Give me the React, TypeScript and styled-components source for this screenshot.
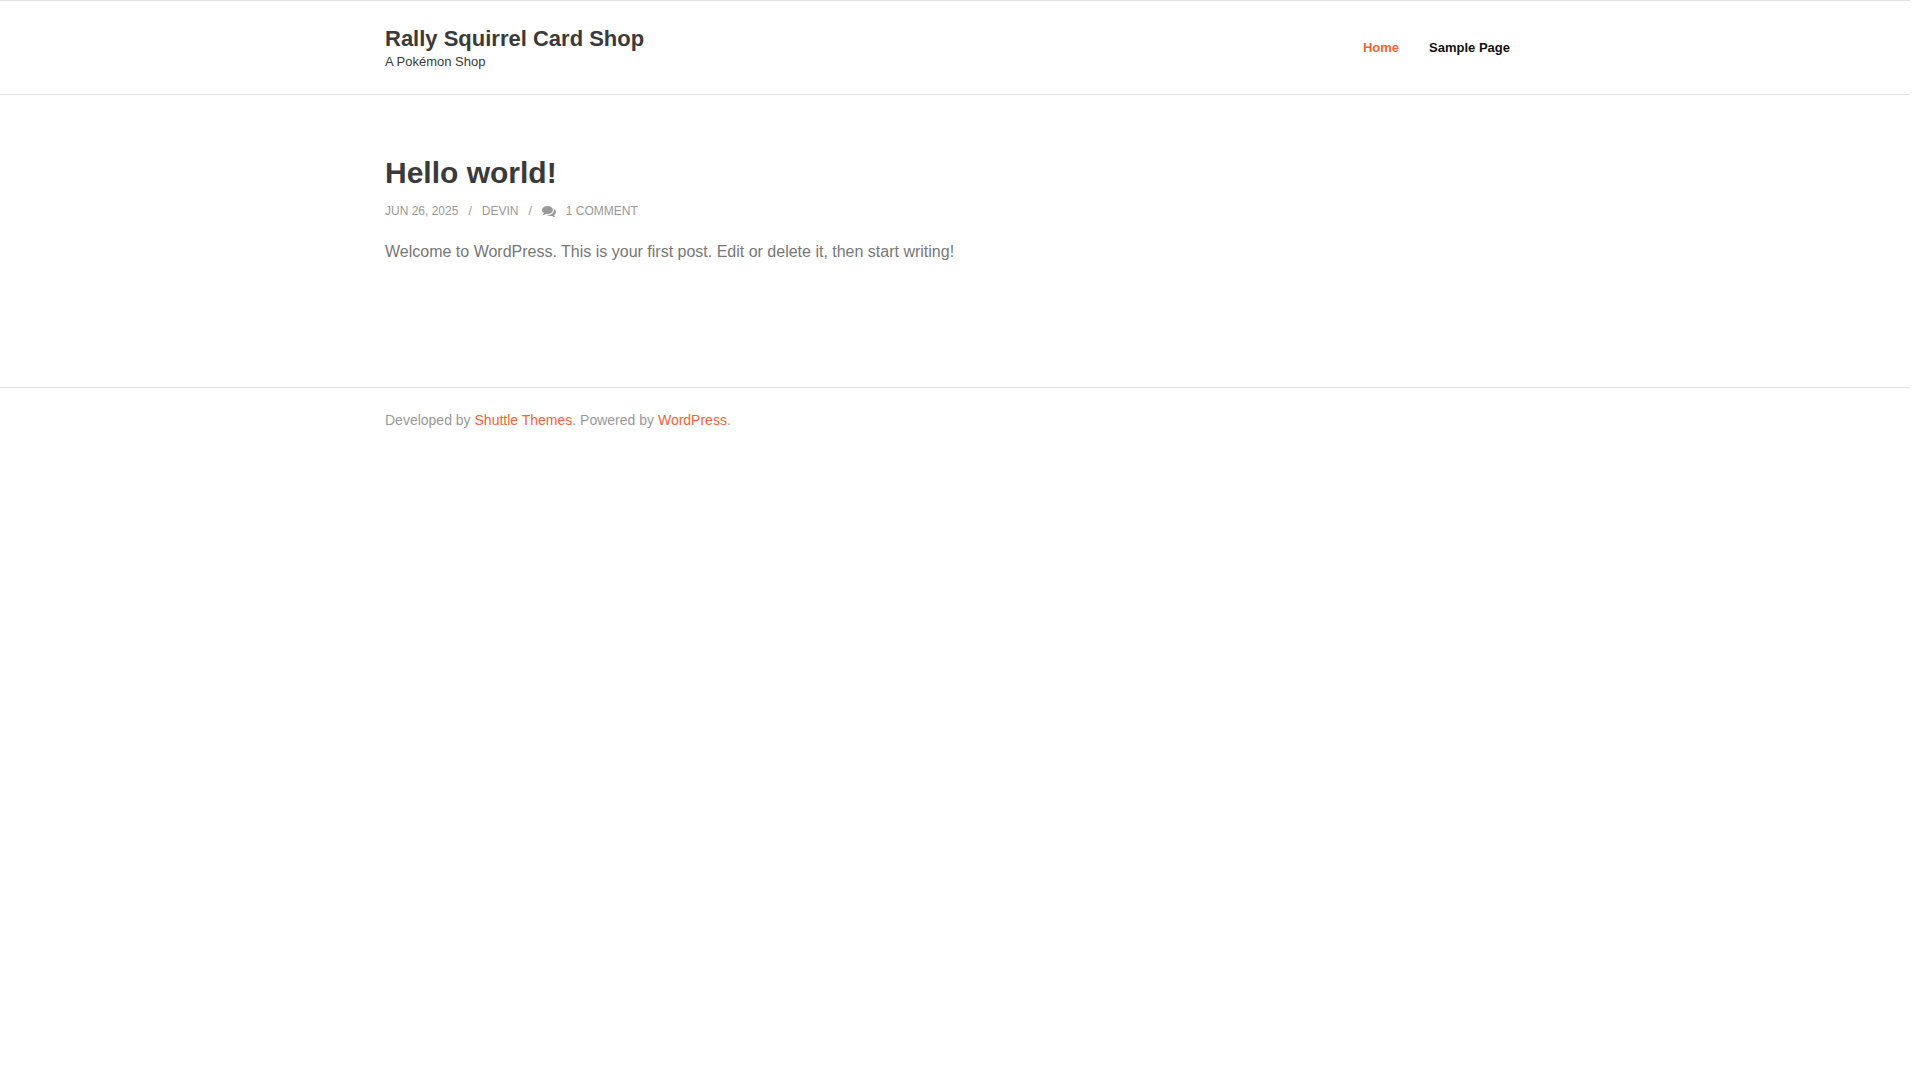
import React from "react";
import styled, { createGlobalStyle } from "styled-components";

const GlobalStyle = createGlobalStyle`
  *, *::before, *::after { box-sizing: border-box; }
  body {
    margin: 0;
    padding-right: 10px;
    background: #fff;
    color: #777;
    font-family: Arial, "Liberation Sans", Helvetica, sans-serif;
    font-size: 16px;
    line-height: 28px;
  }
  a { color: inherit; text-decoration: none; }
`;

const Container = styled.div`
  max-width: 1140px;
  margin: 0 auto;
`;

const Header = styled.header`
  border-top: 1px solid #e2e2e2;
  border-bottom: 1px solid #e2e2e2;
`;

const HeaderRow = styled(Container)`
  display: flex;
  justify-content: space-between;
  align-items: center;
  padding: 24px 0;
`;

const SiteTitle = styled.h1`
  margin: 0;
  font-size: 22px;
  line-height: 28px;
  color: #3a3a3a;
`;

const Tagline = styled.p`
  margin: 0;
  font-size: 13px;
  line-height: 17px;
  color: #3a3a3a;
`;

const Menu = styled.ul`
  display: flex;
  margin: 0;
  padding: 0;
  list-style: none;
`;

const MenuLink = styled.a<{ $active?: boolean }>`
  display: block;
  padding: 0 15px;
  font-size: 13px;
  font-weight: 700;
  line-height: 20px;
  color: ${(p) => (p.$active ? "#f16437" : "#111")};
`;

const Content = styled.main`
  padding: 60px 0 121px;
`;

const PostTitle = styled.h2`
  margin: 0;
  font-size: 30px;
  line-height: 36px;
  color: #3a3a3a;
`;

const Meta = styled.div`
  display: flex;
  align-items: center;
  gap: 10px;
  margin: 8px 0 15px;
  font-size: 12px;
  line-height: 24px;
  text-transform: uppercase;
  color: #999;
`;

const CommentLink = styled.a`
  display: flex;
  align-items: center;
  gap: 10px;
`;

const Excerpt = styled.p`
  margin: 0;
`;

const Footer = styled.footer`
  padding: 18px 0;
  border-top: 1px solid #e2e2e2;
  font-size: 14px;
  color: #999;
`;

const FooterLink = styled.a`
  color: #f16437;
`;

const CommentsIcon = () => (
  <svg width="14" height="14" viewBox="0 0 1792 1792" fill="currentColor" aria-hidden="true">
    <path d="M1408 768q0 139-94 257t-256.500 186.500-353.500 68.500q-86 0-176-16-124 88-278 128-36 9-86 16h-3q-11 0-20.500-8t-11.500-21q-1-3-1-6.500t.5-6.500 2-6l2.500-5 3.500-5.500 4-5 4.500-5 4-4.500q5-6 23-25t26-29.500 22.500-29 25-38.500 20.500-44q-124-72-195-177t-71-224q0-139 94-257t256.500-186.500 353.500-68.500 353.500 68.500 256.500 186.500 94 257zm384 256q0 120-71 224.500t-195 176.500q10 24 20.500 44t25 38.500 22.500 29 26 29.500 23 25q1 1 4 4.500t4.500 5 4 5 3.500 5.500l2.500 5 2 6 .5 6.500-1 6.500q-3 14-13 22t-22 7q-50-7-86-16-154-40-278-128-90 16-176 16-271 0-472-132 58 4 88 4 161 0 309-45t264-129q125-92 192-212t67-254q0-77-23-152 129 71 204 178t75 230z" />
  </svg>
);

export default function App() {
  return (
    <>
      <GlobalStyle />
      <Header>
        <HeaderRow>
          <div>
            <SiteTitle>
              <a href="#home">Rally Squirrel Card Shop</a>
            </SiteTitle>
            <Tagline>A Pokémon Shop</Tagline>
          </div>
          <nav>
            <Menu>
              <li>
                <MenuLink href="#home" $active>Home</MenuLink>
              </li>
              <li>
                <MenuLink href="#sample-page">Sample Page</MenuLink>
              </li>
            </Menu>
          </nav>
        </HeaderRow>
      </Header>
      <Content>
        <Container>
          <article>
            <PostTitle>
              <a href="#hello-world">Hello world!</a>
            </PostTitle>
            <Meta>
              <a href="#hello-world">Jun 26, 2025</a>
              <span>/</span>
              <a href="#devin">Devin</a>
              <span>/</span>
              <CommentLink href="#comments">
                <CommentsIcon />
                1 Comment
              </CommentLink>
            </Meta>
            <Excerpt>
              Welcome to WordPress. This is your first post. Edit or delete it, then start writing!
            </Excerpt>
          </article>
        </Container>
      </Content>
      <Footer>
        <Container>
          Developed by <FooterLink href="#shuttle-themes">Shuttle Themes</FooterLink>. Powered by{" "}
          <FooterLink href="#wordpress">WordPress</FooterLink>.
        </Container>
      </Footer>
    </>
  );
}
